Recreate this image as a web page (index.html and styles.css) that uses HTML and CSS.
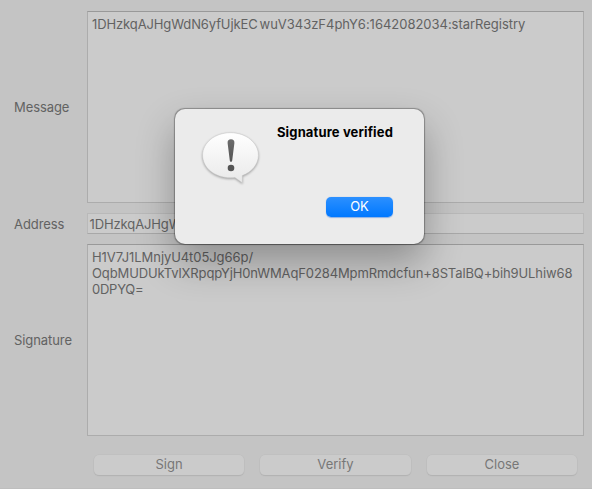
FILE: index.html
```html
<!DOCTYPE html>
<html lang="en">
<head>
<meta charset="utf-8">
<title>Signature</title>
<link rel="stylesheet" href="styles.css">
</head>
<body>
<main class="window">
  <div class="form">
    <div class="label">Message</div>
    <div class="area"><span class="msg-start">1DHzkqAJHgWdN6yfUjkEC</span><span class="msg-end">wuV343zF4phY6:1642082034:starRegistry</span></div>
    <div class="label">Address</div>
    <div class="field">1DHzkqAJHgWdN6yfUjkECwuV343zF4phY6</div>
    <div class="label">Signature</div>
    <div class="area"><span class="sig-a">H1V7J1LMnjyU4t05Jg66p/</span><br><span class="sig-b">OqbMUDUkTvlXRpqpYjH0nWMAqF0284MpmRmdcfun+8STalBQ+bih9ULhiw68</span><br><span class="sig-c">0DPYQ=</span></div>
  </div>
  <div class="actions">
    <button class="btn">Sign</button>
    <button class="btn">Verify</button>
    <button class="btn">Close</button>
  </div>
</main>
<section class="dialog" role="alertdialog">
  <svg class="bubble" width="64" height="64" viewBox="0 0 64 64">
    <defs>
      <linearGradient id="fill" x1="0" y1="0" x2="0" y2="1">
        <stop offset="0" stop-color="#fff"/>
        <stop offset="1" stop-color="#e9e9e9"/>
      </linearGradient>
      <linearGradient id="mark" x1="0" y1="0" x2="0" y2="1">
        <stop offset="0" stop-color="#6c6c6c"/>
        <stop offset="1" stop-color="#545454"/>
      </linearGradient>
    </defs>
    <path class="balloon" d="M31.500 7.700C47 7.700 59.400 17.700 59.400 30.300C59.400 39.300 52.700 47.200 43.300 50.600L43.300 57.700L35.900 52.500C34.500 52.700 33 52.800 31.500 52.800C16 52.800 3.600 42.900 3.600 30.300C3.600 17.700 16 7.700 31.500 7.700Z" fill="url(#fill)"/>
    <path d="M32 14.300C34.300 14.300 35.600 15.600 35.400 18L33.200 35.500C33.100 36.400 32.700 36.800 32 36.800C31.300 36.800 30.900 36.400 30.800 35.500L28.600 18C28.400 15.600 29.700 14.300 32 14.300Z" fill="url(#mark)"/>
    <circle cx="32" cy="43" r="3.300" fill="#555"/>
  </svg>
  <div class="dialog-body">
    <h1 class="title">Signature verified</h1>
    <button class="ok">OK</button>
  </div>
</section>
</body>
</html>
```
FILE: styles.css
```css
* { box-sizing: border-box; }

body {
  margin: 0;
  width: 592px;
  height: 489px;
  overflow: hidden;
  position: relative;
  background: #c4c4c4;
  color: #626262;
  font: 13px/16px Inter, "Liberation Sans", sans-serif;
}

.window {
  height: 489px;
  padding: 11px 8px 0 14px;
  border-bottom: 1px solid #bebebe;
}

.form {
  display: grid;
  grid-template-columns: 73px 497px;
  grid-template-rows: 192px 21px 192px;
  row-gap: 10px;
  align-items: center;
}

.label { letter-spacing: -0.080px; }

.area {
  height: 100%;
  padding: 4px 4px;
  background: #cbcbcb;
  border: 1px solid #acacac;
  border-top-color: #999;
  white-space: nowrap;
}

.field {
  height: 21px;
  padding: 2px 1px 0 1.500px;
  background: #cbcbcb;
  border: 1px solid #b9b9b9;
  border-bottom-color: #a8a8a8;
  letter-spacing: -0.110px;
}

.msg-start { letter-spacing: -0.110px; }
.msg-end { margin-left: 2px; letter-spacing: -0.020px; }
.sig-a { letter-spacing: -0.070px; }
.sig-b { letter-spacing: -0.115px; }
.sig-c { letter-spacing: -0.250px; }

.actions {
  display: grid;
  grid-template-columns: 150px 151px 150px;
  column-gap: 16px;
  padding: 19px 0 0 80px;
}

.btn {
  height: 20px;
  padding: 0 0 2px;
  border: 0;
  border-radius: 5px;
  background: #cbcbcb;
  box-shadow: 0 0 0 0.500px #bcbcbc, 0 1px 1px #a8a8a8;
  color: #777;
  font: inherit;
}

.dialog {
  position: absolute;
  left: 175px;
  top: 109px;
  width: 249px;
  height: 135px;
  padding: 16px 31px 0 24px;
  display: flex;
  justify-content: space-between;
  background: #ebebeb;
  border-radius: 10px;
  box-shadow: 0 0 1px 0.500px rgba(0, 0, 0, 0.300), 0 18px 38px rgba(0, 0, 0, 0.300);
}

.bubble { flex: none; }

.balloon {
  stroke: #c6c6c6;
  stroke-width: 0.500;
  filter: drop-shadow(0 1px 0.800px rgba(0, 0, 0, 0.320));
}

.dialog-body {
  display: flex;
  flex-direction: column;
  align-items: flex-end;
}

.title {
  margin: -1px 0 0;
  color: #000;
  font-size: 13px;
  font-weight: 700;
  line-height: 16px;
  letter-spacing: 0.140px;
  white-space: nowrap;
}

.ok {
  width: 67px;
  height: 20px;
  margin-top: 57px;
  padding: 0 0 2px;
  border: 0;
  border-radius: 5px;
  background: linear-gradient(#2c90ff, #0078ff);
  box-shadow: 0 0.500px 1px rgba(0, 90, 220, 0.400);
  color: #fff;
  font: inherit;
}
```
